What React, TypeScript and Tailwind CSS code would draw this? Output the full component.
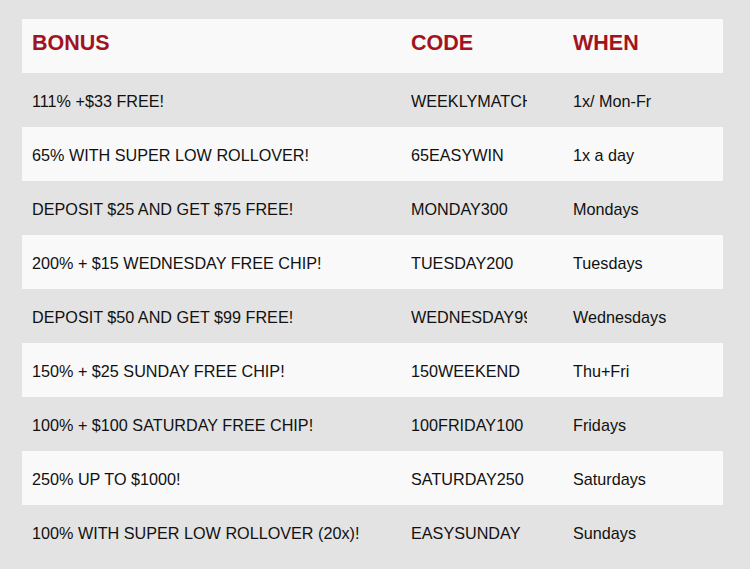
const rows = [
  { bonus: "111% +$33 FREE!", code: "WEEKLYMATCH", when: "1x/ Mon-Fr" },
  { bonus: "65% WITH SUPER LOW ROLLOVER!", code: "65EASYWIN", when: "1x a day" },
  { bonus: "DEPOSIT $25 AND GET $75 FREE!", code: "MONDAY300", when: "Mondays" },
  { bonus: "200% + $15 WEDNESDAY FREE CHIP!", code: "TUESDAY200", when: "Tuesdays" },
  { bonus: "DEPOSIT $50 AND GET $99 FREE!", code: "WEDNESDAY99", when: "Wednesdays" },
  { bonus: "150% + $25 SUNDAY FREE CHIP!", code: "150WEEKEND", when: "Thu+Fri" },
  { bonus: "100% + $100 SATURDAY FREE CHIP!", code: "100FRIDAY100", when: "Fridays" },
  { bonus: "250% UP TO $1000!", code: "SATURDAY250", when: "Saturdays" },
  { bonus: "100% WITH SUPER LOW ROLLOVER (20x)!", code: "EASYSUNDAY", when: "Sundays" },
];

export default function App() {
  return (
    <div className="w-[750px] h-[569px] bg-[#e3e3e3] pt-[19px] pl-[22px] font-['Liberation_Sans',Arial,sans-serif] overflow-hidden">
      <div className="w-[701px]">
        {/* header */}
        <div className="flex items-center h-[54px] pb-[5px] bg-[#f9f9f9] text-[#a1141f] font-bold text-[21.5px]">
          <div className="w-[379px] pl-[10px]">BONUS</div>
          <div className="w-[162px] pl-[10px]">CODE</div>
          <div className="flex-1 pl-[10px]">WHEN</div>
        </div>

        {rows.map((row, i) => (
          <div
            key={row.code}
            className={`flex items-center h-[54px] pt-[3px] text-[16.2px] text-[#111] ${i % 2 === 1 ? "bg-[#f9f9f9]" : ""}`}
          >
            <div className="w-[379px] pl-[10px] whitespace-nowrap">{row.bonus}</div>
            <div className="w-[162px] pl-[10px]">
              <div className="w-[116px] overflow-hidden whitespace-nowrap">{row.code}</div>
            </div>
            <div className="flex-1 pl-[10px] whitespace-nowrap">{row.when}</div>
          </div>
        ))}
      </div>
    </div>
  );
}
